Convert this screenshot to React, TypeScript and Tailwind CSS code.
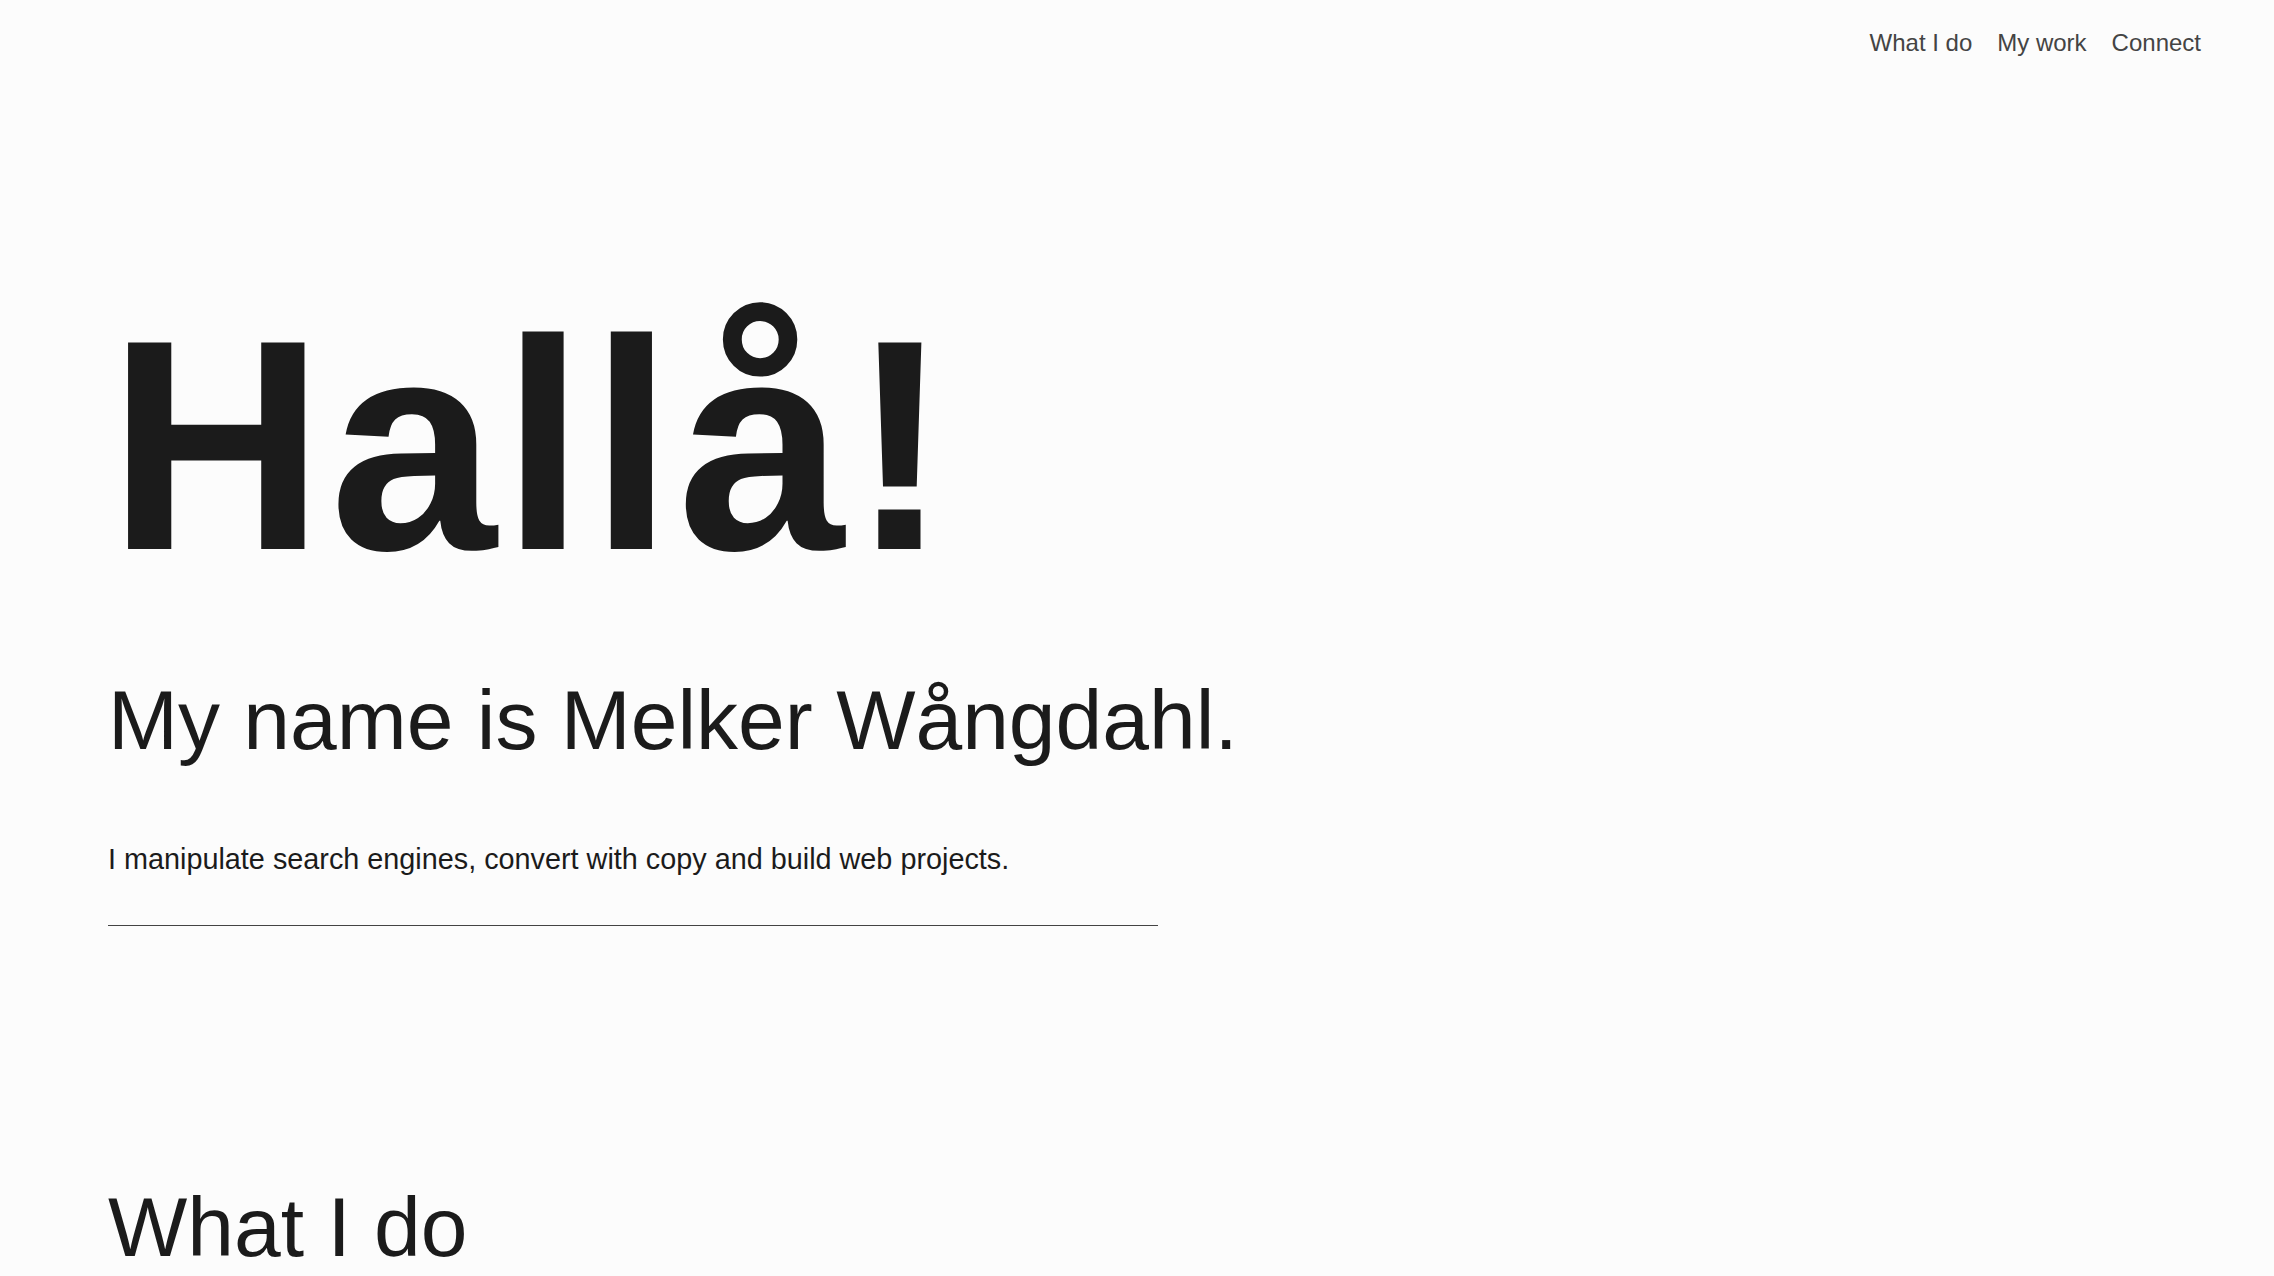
export default function App() {
  return (
    <div className="min-h-screen bg-[#fcfcfc] text-[#1b1b1b] font-['Liberation_Sans',Arial,sans-serif]">
      {/* Top navigation */}
      <nav className="flex justify-end gap-[25px] pt-[31px] pr-[73px] text-[24px] leading-none text-[#444]">
        <a href="#what">What I do</a>
        <a href="#work">My work</a>
        <a href="#connect">Connect</a>
      </nav>

      {/* Hero */}
      <main className="pl-[108px]">
        <section className="pt-[240px]">
          <h1 className="text-[300px] font-bold leading-none tracking-[5px]">Hallå!</h1>
          <h2 className="mt-[83px] text-[84px] leading-none whitespace-nowrap">My name is Melker Wångdahl.</h2>
          <p className="mt-[83px] text-[28.8px] leading-none">
            I manipulate search engines, convert with copy and build web projects.
          </p>
          <hr className="mt-[51px] w-[1050px] border-0 border-t border-[#444]" />
        </section>

        <section id="what" className="pt-[259px]">
          <h2 className="text-[84px] leading-none">What I do</h2>
        </section>
      </main>
    </div>
  );
}
